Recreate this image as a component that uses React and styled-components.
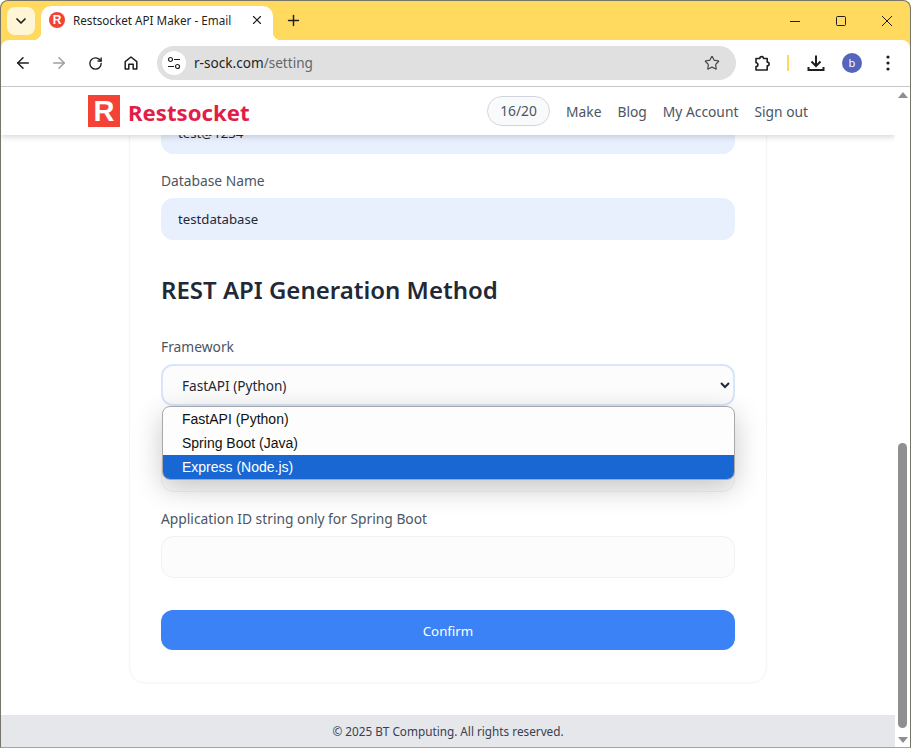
import React from 'react';
import styled, { createGlobalStyle } from 'styled-components';
import { ArrowLeft, ArrowRight, RotateCw, Star, X, Plus, ChevronDown } from 'lucide-react';

const pageFont = `"Noto Sans", "Noto Sans CJK KR", sans-serif`;

const GlobalStyle = createGlobalStyle`
  html, body {
    margin: 0;
    height: 100%;
    overflow: hidden;
    background: #ffffff;
  }
  * {
    box-sizing: border-box;
  }
`;

const Window = styled.div`
  width: 911px;
  height: 748px;
  display: flex;
  flex-direction: column;
  background: #ffda5e;
  border: 1px solid #77746a;
  border-bottom-color: #a3a3a3;
  border-radius: 8px 8px 0 0;
  overflow: hidden;
  font-family: ${pageFont};
`;

const TitleBar = styled.div`
  height: 39px;
  flex: none;
  display: flex;
  align-items: flex-end;
  padding-left: 6px;
`;

const TabSearch = styled.div`
  width: 28px;
  height: 28px;
  margin-bottom: 5px;
  border-radius: 8px;
  background: #fff6d8;
  display: flex;
  align-items: center;
  justify-content: center;
  color: #1f1f1f;
`;

const Tab = styled.div`
  position: relative;
  width: 232px;
  height: 34px;
  margin-left: 6px;
  padding: 0 9px 6px 8px;
  display: flex;
  align-items: center;
  background: #ffffff;
  border-radius: 10px 10px 0 0;
  color: #1f1f1f;
  font-size: 11.7px;

  &::before,
  &::after {
    content: '';
    position: absolute;
    bottom: 0;
    width: 8px;
    height: 8px;
  }
  &::before {
    left: -8px;
    background: radial-gradient(circle at 0 0, transparent 8px, #ffffff 8.5px);
  }
  &::after {
    right: -8px;
    background: radial-gradient(circle at 100% 0, transparent 8px, #ffffff 8.5px);
  }
`;

const Favicon = styled.span`
  width: 16px;
  height: 16px;
  flex: none;
  border-radius: 50%;
  background: #f44336;
  color: #ffffff;
  font: 700 12px/16px "Liberation Sans", sans-serif;
  text-align: center;
`;

const TabTitle = styled.span`
  flex: 1;
  margin-left: 8px;
  white-space: nowrap;
  overflow: hidden;
`;

const NewTab = styled.div`
  margin: 0 0 11px 12px;
  display: flex;
  color: #1f1f1f;
`;

const WindowControls = styled.div`
  margin-left: auto;
  height: 100%;
  display: flex;
  align-items: center;
`;

const WindowButton = styled.div`
  width: 46px;
  display: flex;
  justify-content: center;
  color: #1f1f1f;
`;

const Toolbar = styled.div`
  height: 47px;
  flex: none;
  display: flex;
  align-items: center;
  padding: 0 0 0 4px;
  background: #ffffff;
  border-radius: 8px 8px 0 0;
  border-bottom: 1px solid #c8c8c8;
`;

const ToolButton = styled.div`
  width: 36px;
  height: 36px;
  flex: none;
  display: flex;
  align-items: center;
  justify-content: center;
  color: ${props => props.$color || '#1f1f1f'};
`;

const Omnibox = styled.div`
  width: 579px;
  height: 34px;
  margin: 0 8px;
  padding: 0 16px 0 5px;
  display: flex;
  align-items: center;
  border-radius: 17px;
  background: #e0e0e0;
  font-size: 13.6px;
`;

const SiteInfo = styled.div`
  width: 24px;
  height: 24px;
  border-radius: 50%;
  background: #ffffff;
  display: flex;
  align-items: center;
  justify-content: center;
  color: #1f1f1f;
`;

const Url = styled.span`
  margin-left: 8px;
  padding-bottom: 1px;
  flex: 1;
  color: #1f1f1f;

  span {
    color: #646669;
  }
`;

const ToolbarDivider = styled.div`
  width: 2px;
  height: 16px;
  margin: 0 9px 0 7px;
  background: #ffd95c;
`;

const Avatar = styled.div`
  width: 20px;
  height: 20px;
  border-radius: 50%;
  background: #5565bd;
  color: #ffffff;
  font-size: 11px;
  line-height: 20px;
  text-align: center;
`;

const Viewport = styled.div`
  flex: 1;
  min-height: 0;
  display: flex;
`;

const Page = styled.div`
  position: relative;
  flex: 1;
  min-width: 0;
  display: flex;
  flex-direction: column;
  justify-content: flex-end;
  overflow: hidden;
  background: #ffffff;
`;

const SiteHeader = styled.header`
  position: absolute;
  top: 0;
  left: 0;
  right: 0;
  z-index: 5;
  height: 48px;
  background: #ffffff;
  box-shadow: 0 2px 6px rgba(0, 0, 0, 0.16);
`;

const HeaderInner = styled.div`
  width: 720px;
  height: 48px;
  margin: 0 auto;
  display: flex;
  align-items: center;
  justify-content: space-between;
`;

const Brand = styled.div`
  display: flex;
  align-items: center;
  gap: 8px;
`;

const BrandMark = styled.div`
  width: 32px;
  height: 32px;
  background: #f44336;
  color: #ffffff;
  font: 700 29px/32px "Liberation Sans", sans-serif;
  text-align: center;
`;

const BrandName = styled.div`
  padding-top: 3px;
  color: #e11d48;
  font-size: 22.2px;
  font-weight: 700;
  line-height: 32px;
`;

const Nav = styled.nav`
  display: flex;
  align-items: center;
  gap: 16px;
  color: #4b5563;
  font-size: 13.8px;
`;

const Credits = styled.div`
  width: 63px;
  height: 30px;
  border: 1px solid #d1d5db;
  border-radius: 15px;
  background: #f9fafb;
  line-height: 28px;
  text-align: center;
`;

const Main = styled.main`
  display: flex;
  justify-content: center;
  padding-bottom: 32px;
`;

const Card = styled.div`
  width: 638px;
  padding: 0 31px 32px;
  background: #ffffff;
  border: 1px solid #f6f6f7;
  border-radius: 16px;
  box-shadow: 0 1px 2px rgba(0, 0, 0, 0.03);
`;

const Field = styled.div`
  position: relative;
  margin-bottom: 17px;
`;

const Label = styled.label`
  display: block;
  margin-bottom: 7px;
  min-height: 20px;
  color: #4b5563;
  font-size: 13.8px;
  line-height: 20px;
`;

const Input = styled.input`
  display: block;
  width: 100%;
  height: 42px;
  padding: 0 16px;
  border: 1px solid ${props => (props.$filled ? '#e8f0fe' : '#f0f1f3')};
  border-radius: 12px;
  background: ${props => (props.$filled ? '#e8f0fe' : '#fcfcfc')};
  color: #1f2937;
  font-family: inherit;
  font-size: 13.2px;
  outline: none;
`;

const SectionTitle = styled.h2`
  margin: 34px 0 31px;
  color: #1f2937;
  font-size: 24px;
  font-weight: 600;
  line-height: 32px;
`;

const Select = styled.select`
  display: block;
  width: 100%;
  height: 42px;
  padding: 0 15px;
  border: 2px solid #d7e5fd;
  border-radius: 12px;
  background: #fcfcfc;
  color: #1f2937;
  font-family: inherit;
  font-size: 13.6px;
  outline: none;
`;

const OptionList = styled.div`
  position: absolute;
  top: 69px;
  left: 1px;
  z-index: 3;
  width: 573px;
  background: #fdfdfd;
  border: 1px solid #a9a9a9;
  border-radius: 8px;
  box-shadow: 0 8px 28px rgba(0, 0, 0, 0.22);
  overflow: hidden;
  font-family: "Liberation Sans", sans-serif;
  font-size: 14px;
`;

const Option = styled.div`
  height: 24px;
  padding-left: 19px;
  line-height: 24px;
  color: ${props => (props.$active ? '#ffffff' : '#111111')};
  background: ${props => (props.$active ? '#1967d2' : 'transparent')};
`;

const SubmitButton = styled.button`
  display: block;
  width: 100%;
  height: 40px;
  margin-top: 32px;
  padding-top: 2px;
  border: 0;
  border-radius: 12px;
  background: #3b82f6;
  color: #ffffff;
  font-family: inherit;
  font-size: 13.3px;
`;

const Footer = styled.footer`
  height: 32px;
  flex: none;
  background: #e5e7eb;
  color: #374151;
  font-size: 11.75px;
  line-height: 32px;
  text-align: center;
`;

const Scrollbar = styled.div`
  width: 15px;
  flex: none;
  display: flex;
  flex-direction: column;
  align-items: center;
  background: #ffffff;
`;

const ScrollArrow = styled.div`
  width: 0;
  height: 0;
  margin: ${props => (props.$down ? '5px 0 4px' : '5px 0')};
  border-left: 5px solid transparent;
  border-right: 5px solid transparent;
  border-bottom: ${props => (props.$down ? '0' : '6px solid #8f8f8f')};
  border-top: ${props => (props.$down ? '6px solid #8f8f8f' : '0')};
`;

const ScrollTrack = styled.div`
  flex: 1;
  width: 100%;
  padding-bottom: 4px;
  display: flex;
  flex-direction: column;
  justify-content: flex-end;
  align-items: center;
`;

const ScrollThumb = styled.div`
  width: 9px;
  height: 285px;
  border-radius: 5px;
  background: #8f8f8f;
`;

const SliderGlyph = () => (
  <svg width="14" height="14" viewBox="0 0 14 14" fill="none" stroke="currentColor" strokeWidth="1.2">
    <circle cx="3.5" cy="3.5" r="2" />
    <path d="M7 3.5h6M1 10.5h6" />
    <circle cx="10.5" cy="10.5" r="2" />
  </svg>
);

const HomeGlyph = () => (
  <svg width="16" height="16" viewBox="0 0 16 16" fill="none" stroke="currentColor" strokeWidth="1.5">
    <path d="M2.2 14V6.6L8 2l5.8 4.6V14h-3.6V9.2H5.8V14z" strokeLinejoin="round" />
  </svg>
);

const PuzzleGlyph = () => (
  <svg width="18" height="18" viewBox="0 0 18 18" fill="none" stroke="currentColor" strokeWidth="1.6" strokeLinejoin="round">
    <path d="M3 16v-3.4a1.9 1.9 0 0 0 0-3.8V4.5h3.8a1.9 1.9 0 0 1 3.8 0h3.6v3.6a1.9 1.9 0 0 1 0 3.8V16z" />
  </svg>
);

const DownloadGlyph = () => (
  <svg width="18" height="18" viewBox="0 0 18 18" fill="none" stroke="currentColor" strokeWidth="2">
    <path d="M9 1.5v10M4.5 7.5 9 12l4.5-4.5M1.5 13v3h15v-3" />
  </svg>
);

const MenuGlyph = () => (
  <svg width="4" height="16" viewBox="0 0 4 16" fill="currentColor">
    <circle cx="2" cy="2" r="1.6" />
    <circle cx="2" cy="8" r="1.6" />
    <circle cx="2" cy="14" r="1.6" />
  </svg>
);

const MinimizeGlyph = () => (
  <svg width="10" height="10" viewBox="0 0 10 10" stroke="currentColor" strokeWidth="1">
    <path d="M0 5.5h10" />
  </svg>
);

const MaximizeGlyph = () => (
  <svg width="10" height="10" viewBox="0 0 10 10" fill="none" stroke="currentColor" strokeWidth="1">
    <rect x="0.5" y="0.5" width="9" height="9" rx="1" />
  </svg>
);

const CloseGlyph = () => (
  <svg width="10" height="10" viewBox="0 0 10 10" stroke="currentColor" strokeWidth="1">
    <path d="M0 0l10 10M10 0L0 10" />
  </svg>
);

const App = () => {
  return (
    <Window>
      <GlobalStyle />
      <TitleBar>
        <TabSearch>
          <ChevronDown size={16} strokeWidth={2.6} />
        </TabSearch>
        <Tab>
          <Favicon>R</Favicon>
          <TabTitle>Restsocket API Maker - Email</TabTitle>
          <X size={14} strokeWidth={2} />
        </Tab>
        <NewTab>
          <Plus size={17} strokeWidth={2} />
        </NewTab>
        <WindowControls>
          <WindowButton><MinimizeGlyph /></WindowButton>
          <WindowButton><MaximizeGlyph /></WindowButton>
          <WindowButton><CloseGlyph /></WindowButton>
        </WindowControls>
      </TitleBar>

      <Toolbar>
        <ToolButton><ArrowLeft size={18} /></ToolButton>
        <ToolButton $color="#a0a0a0"><ArrowRight size={18} /></ToolButton>
        <ToolButton><RotateCw size={15} strokeWidth={2.2} /></ToolButton>
        <ToolButton><HomeGlyph /></ToolButton>
        <Omnibox>
          <SiteInfo><SliderGlyph /></SiteInfo>
          <Url>r-sock.com<span>/setting</span></Url>
          <Star size={16} strokeWidth={1.8} color="#4a4a4a" />
        </Omnibox>
        <ToolButton><PuzzleGlyph /></ToolButton>
        <ToolbarDivider />
        <ToolButton><DownloadGlyph /></ToolButton>
        <ToolButton><Avatar>b</Avatar></ToolButton>
        <ToolButton><MenuGlyph /></ToolButton>
      </Toolbar>

      <Viewport>
        <Page>
          <SiteHeader>
            <HeaderInner>
              <Brand>
                <BrandMark>R</BrandMark>
                <BrandName>Restsocket</BrandName>
              </Brand>
              <Nav>
                <Credits>16/20</Credits>
                <span>Make</span>
                <span>Blog</span>
                <span>My Account</span>
                <span>Sign out</span>
              </Nav>
            </HeaderInner>
          </SiteHeader>

          <Main>
            <Card>
              <Field>
                <Input $filled defaultValue="test@1234" />
              </Field>
              <Field>
                <Label>Database Name</Label>
                <Input $filled defaultValue="testdatabase" />
              </Field>
              <SectionTitle>REST API Generation Method</SectionTitle>
              <Field>
                <Label>Framework</Label>
                <Select defaultValue="fastapi">
                  <option value="fastapi">FastAPI (Python)</option>
                  <option value="spring">Spring Boot (Java)</option>
                  <option value="express">Express (Node.js)</option>
                </Select>
                <OptionList>
                  <Option>FastAPI (Python)</Option>
                  <Option>Spring Boot (Java)</Option>
                  <Option $active>Express (Node.js)</Option>
                </OptionList>
              </Field>
              <Field>
                <Label />
                <Input />
              </Field>
              <Field>
                <Label>Application ID string only for Spring Boot</Label>
                <Input />
              </Field>
              <SubmitButton>Confirm</SubmitButton>
            </Card>
          </Main>
          <Footer>© 2025 BT Computing. All rights reserved.</Footer>
        </Page>
        <Scrollbar>
          <ScrollArrow />
          <ScrollTrack>
            <ScrollThumb />
          </ScrollTrack>
          <ScrollArrow $down />
        </Scrollbar>
      </Viewport>
    </Window>
  );
};

export default App;
